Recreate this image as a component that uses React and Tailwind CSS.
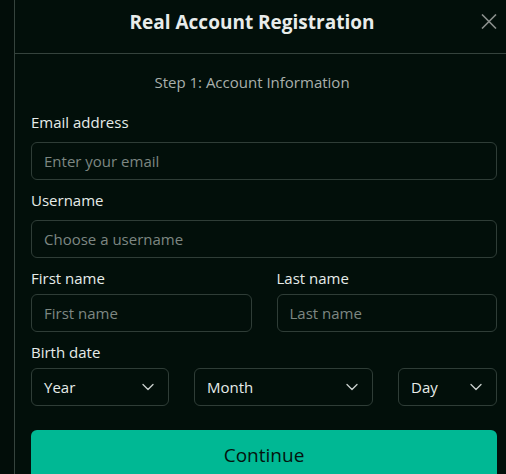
import { ChevronDown } from 'lucide-react';

const font = { fontFamily: '"Open Sans", "Noto Sans", sans-serif' };

function Field({ label, placeholder, gap = 'mb-[10px]' }) {
  return (
    <div className="flex flex-col">
      <label className={`text-[15px] leading-5 text-[#e6ece9] ${gap}`}>{label}</label>
      <input
        placeholder={placeholder}
        className="h-[38px] w-full rounded-md border border-[#2f3d37] bg-transparent px-3 text-[15px] text-white placeholder:text-[#7d8782] outline-none"
      />
    </div>
  );
}

function Select({ label, className }) {
  return (
    <div
      className={`h-[38px] flex items-center justify-between rounded-md border border-[#2f3d37] pl-3 pr-[10px] text-[15px] text-[#e6ece9] ${className}`}
    >
      <span>{label}</span>
      <ChevronDown size={20} strokeWidth={1.6} className="text-[#c9cfcc]" />
    </div>
  );
}

export default function App() {
  return (
    <div className="h-[474px] w-[506px] overflow-hidden bg-[#020d09] flex" style={font}>
      <div className="w-[14px] shrink-0 bg-[#020d09]" />
      <div className="flex-1 border-l border-[#35433d] bg-[#020f0a] flex flex-col">
        <div className="relative h-[54px] shrink-0 border-b border-[#35433d] flex items-start justify-center pr-[17px]">
          <h1 className="text-[19px] leading-7 font-bold text-[#e8ecea] mt-[8px]">Real Account Registration</h1>
          <button className="absolute right-[9px] top-[14px] text-[#8a8f8c]">
            <svg width="16" height="15" viewBox="0 0 16 15" fill="none" stroke="currentColor" strokeWidth="1.6">
              <path d="M1 0.5 15 14.5M15 0.5 1 14.5" />
            </svg>
          </button>
        </div>

        <div className="pl-4 pr-[9px] flex flex-col">
          <p className="text-center text-[15px] leading-5 text-[#a9b0ac] mt-[18px] mb-[20px] pr-[24px]">
            Step 1: Account Information
          </p>

          <Field label="Email address" placeholder="Enter your email" />
          <div className="mt-[10px]">
            <Field label="Username" placeholder="Choose a username" />
          </div>
          <div className="mt-[10px] grid grid-cols-2 gap-[25px]">
            <Field label="First name" placeholder="First name" gap="mb-[6px]" />
            <Field label="Last name" placeholder="Last name" gap="mb-[6px]" />
          </div>
          <div className="mt-[10px] flex flex-col">
            <span className="text-[15px] leading-5 text-[#e6ece9] mb-[6px]">Birth date</span>
            <div className="flex gap-[25px]">
              <Select label="Year" className="w-[138px]" />
              <Select label="Month" className="w-[179px]" />
              <Select label="Day" className="flex-1" />
            </div>
          </div>

          <button className="mt-[24px] h-[50px] w-full shrink-0 rounded-md bg-[#00b894] text-[19px] leading-[50px] text-[#04140e]">
            Continue
          </button>
        </div>
      </div>
    </div>
  );
}
